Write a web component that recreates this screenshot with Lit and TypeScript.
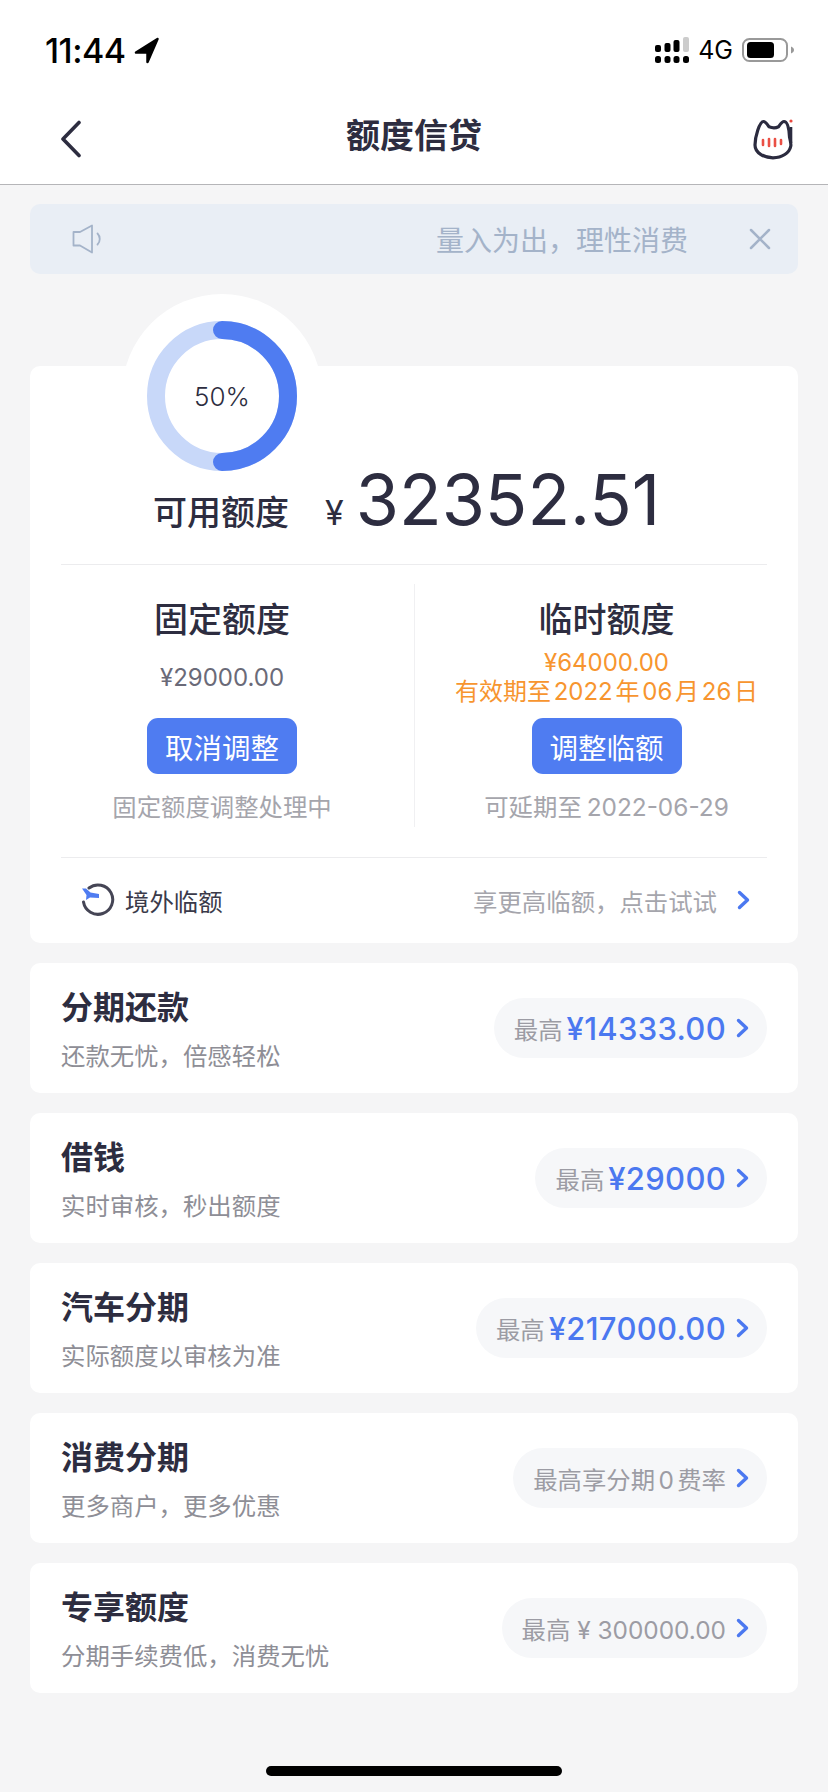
import { LitElement, html, css } from "lit";
import { customElement } from "lit/decorators.js";

const chevron = html`<svg class="chev" width="13" height="20" viewBox="0 0 13 20"><path d="M2.5 2.5 L10.5 10 L2.5 17.5" fill="none" stroke="#4b78f0" stroke-width="3.4" stroke-linecap="round" stroke-linejoin="round"/></svg>`;

const rows = [
  { t: "分期还款", s: "还款无忧，倍感轻松", label: "最高", v: "¥14333.00", cls: "" },
  { t: "借钱", s: "实时审核，秒出额度", label: "最高", v: "¥29000", cls: "" },
  { t: "汽车分期", s: "实际额度以审核为准", label: "最高", v: "¥217000.00", cls: "" },
  { t: "消费分期", s: "更多商户，更多优惠", label: "最高享分期 0 费率", v: "", cls: "tight" },
  { t: "专享额度", s: "分期手续费低，消费无忧", label: "最高 ¥ 300000.00", v: "", cls: "" },
];

@customElement("app-root")
export class AppRoot extends LitElement {
  static styles = css`
    :host { display: block; width: 828px; height: 1792px; background: #f5f5f6; color: #2d2d40; font-family: Inter, "Noto Sans CJK SC", sans-serif; overflow: hidden; position: relative; }
    * { box-sizing: border-box; }
    .top { background: #fff; border-bottom: 1px solid #b5b5b8; }
    .status { height: 100px; display: flex; align-items: center; padding: 0 34px 0 45px; color: #000; }
    .time { font-size: 34px; font-weight: 500; letter-spacing: -0.5px; margin-right: 8px; }
    .spacer { flex: 1; }
    .net { font-size: 25px; margin: 0 9px; }
    .nav { height: 84px; display: flex; align-items: center; justify-content: space-between; padding: 0 33px 0 60px; position: relative; }
    .nav svg { margin-bottom: 6px; }
    .title { position: absolute; left: 0; right: 0; top: 12px; text-align: center; font-size: 34px; line-height: 48px; font-weight: 600; }
    .notice { margin: 19px 30px 0; height: 70px; border-radius: 10px; background: #e9eef5; display: flex; align-items: center; padding: 0 27px 0 42px; color: #a4b3c9; font-size: 28px; }
    .notice .msg { margin-left: auto; margin-right: 61px; }
    .card { background: #fff; border-radius: 10px; margin: 0 30px; }
    .main { margin-top: 92px; position: relative; height: 577px; }
    .bump { position: absolute; left: 92px; top: -72px; width: 200px; height: 200px; border-radius: 50%; background: #fff; display: flex; align-items: center; justify-content: center; }
    .ring { position: relative; margin-top: 4px; width: 150px; height: 150px; display: flex; align-items: center; justify-content: center; font-size: 26px; font-weight: 300; }
    .ring svg { position: absolute; inset: 0; }
    .pct { position: relative; }
    .avail { height: 199px; border-bottom: 1px solid #ececee; margin: 0 31px; padding: 91px 0 0 92px; display: flex; align-items: baseline; }
    .avail .l { font-size: 34px; font-weight: 500; margin-right: 36px; }
    .avail .y { font-size: 34px; margin-right: 12px; }
    .avail .n { font-size: 70px; line-height: 86px; font-weight: 400; }
    .cols { display: grid; grid-template-columns: 1fr 1fr; margin-top: 19px; height: 243px; position: relative; }
    .col { display: flex; flex-direction: column; align-items: center; padding-top: 12px; }
    .col + .col { border-left: 1px solid #f0f0f2; }
    .col h3 { margin: 0; font-size: 34px; line-height: 48px; font-weight: 500; }
    .info { height: 66px; margin-bottom: 8px; display: flex; flex-direction: column; justify-content: center; align-items: center; font-size: 24px; line-height: 29px; color: #6a6a78; }
    .info.o { color: #f7952f; word-spacing: -4px; }
    .btn { width: 150px; height: 56px; border-radius: 11px; background: #4f7cf1; color: #fff; font-size: 28.5px; display: flex; align-items: center; justify-content: center; }
    .note { margin-top: 15px; line-height: 36px; font-size: 24.4px; color: #a5a5ac; word-spacing: -2px; }
    .abroad { margin: 30px 31px 0; border-top: 1px solid #ececee; height: 85px; display: flex; align-items: center; padding: 0 17px 0 20px; font-size: 24.4px; }
    .abroad .hint { margin-left: auto; color: #a5a5ac; margin-right: 20px; }
    .abroad .lbl { margin-left: 10px; color: #3a3a4a; }
    .list { display: flex; flex-direction: column; gap: 20px; margin-top: 20px; }
    .row { height: 130px; display: flex; align-items: center; justify-content: space-between; padding: 0 31px; }
    .row .txt { padding-top: 2px; }
    .row h4 { margin: 0; font-size: 32px; line-height: 46px; font-weight: 600; }
    .row p { margin: 8px 0 0; font-size: 24.4px; line-height: 34px; color: #8e8e96; }
    .pill { height: 60px; border-radius: 30px; background: #f6f7f9; padding: 0 18px 0 20px; display: flex; align-items: center; font-size: 24.4px; color: #9c9ca4; }
    .pill.tight { word-spacing: -3.5px; }
    .pill b { font-size: 31px; font-weight: 500; color: #4b78f0; margin-left: 4px; letter-spacing: 0.3px; }
    .pill .chev { margin-left: 10px; }
    .home { position: absolute; left: 266px; top: 1766px; width: 296px; height: 10px; border-radius: 5px; background: #000; }
  `;

  render() {
    return html`
      <div class="top">
        <div class="status">
          <span class="time">11:44</span>
          <svg width="26" height="27" viewBox="0 0 26 27"><path d="M23.5 2 L2 15.5 H13.5 V25 Z" fill="#000" stroke="#000" stroke-width="2.5" stroke-linejoin="round"/></svg>
          <span class="spacer"></span>
          <svg width="34" height="27" viewBox="0 0 34 27">
            <rect x="0" y="8" width="6" height="7" rx="2" fill="#000"/><rect x="9.500" y="6" width="6" height="9" rx="2" fill="#000"/><rect x="18.500" y="3" width="6" height="12" rx="2" fill="#000"/><rect x="28" y="0" width="6" height="15" rx="2" fill="#ccc"/>
            <rect x="0" y="19" width="6" height="7" rx="2.500" fill="#000"/><rect x="9.500" y="19" width="6" height="7" rx="2.500" fill="#000"/><rect x="18.500" y="19" width="6" height="7" rx="2.500" fill="#000"/><rect x="28" y="19" width="6" height="7" rx="2.500" fill="#000"/>
          </svg>
          <span class="net">4G</span>
          <svg width="52" height="24" viewBox="0 0 52 24">
            <rect x="1" y="1" width="44" height="22" rx="6.500" fill="none" stroke="#999" stroke-width="2"/>
            <rect x="5" y="4" width="27" height="16" rx="3.500" fill="#000"/>
            <path d="M49 8.500 C51 9.500 52 10.500 52 12 C52 13.500 51 14.500 49 15.500 Z" fill="#999"/>
          </svg>
        </div>
        <div class="nav">
          <svg width="22" height="38" viewBox="0 0 22 38"><path d="M19 2.500 L3 19 L19 35.500" fill="none" stroke="#2d2d40" stroke-width="3.600" stroke-linecap="round" stroke-linejoin="round"/></svg>
          <div class="title">额度信贷</div>
          <svg width="42" height="41" viewBox="0 0 42 41">
            <path d="M10.500 2.500 C12.500 2.500 14 5 16 7.800 C19 9 23 9 25.500 7.800 C27.500 5 29 2.500 31 2.500 C34.500 2.500 36 9 36.500 18 C37.500 22 38.200 25 37.800 27 C36.500 34 29 38.800 20 38.800 C11 38.800 2 34 2 26 C2 18 6.500 2.500 10.500 2.500 Z" fill="#fff" stroke="#2b2b3f" stroke-width="3.200" stroke-linejoin="round"/>
            <circle cx="38" cy="2" r="1.600" fill="#e8483f"/>
            <path d="M38 8 V24" stroke="#2b2b3f" stroke-width="2.600"/>
            <path d="M10 21 V26 M16 20 V27 M22 20 V27 M28 21 V25" stroke="#ea5045" stroke-width="2.600" stroke-linecap="round"/>
          </svg>
        </div>
      </div>

      <div class="notice">
        <svg width="32" height="30" viewBox="0 0 32 30" fill="none" stroke="#a4b3c9" stroke-width="1.800" stroke-linejoin="round" stroke-linecap="round">
          <path d="M1.500 8 H8 L20 1.500 V28.500 L8 21.500 H1.500 Z"/><path d="M25.500 9.500 C28.500 12.500 28.500 17.500 25.500 20.500"/>
        </svg>
        <span class="msg">量入为出，理性消费</span>
        <svg width="22" height="22" viewBox="0 0 22 22"><path d="M2 2 L20 20 M20 2 L2 20" stroke="#a4b3c9" stroke-width="2.500" stroke-linecap="round"/></svg>
      </div>

      <div class="card main">
        <div class="bump">
          <div class="ring">
            <svg width="150" height="150" viewBox="0 0 150 150" fill="none">
              <circle cx="75" cy="75" r="66" stroke="#c8d8f9" stroke-width="18"/>
              <path d="M75 9 A66 66 0 0 1 75 141" stroke="#4f7cf1" stroke-width="18" stroke-linecap="round"/>
            </svg>
            <span class="pct">50%</span>
          </div>
        </div>
        <div class="avail">
          <span class="l">可用额度</span><span class="y">¥</span><span class="n">32352.51</span>
        </div>
        <div class="cols">
          <div class="col">
            <h3>固定额度</h3>
            <div class="info">¥29000.00</div>
            <div class="btn">取消调整</div>
            <div class="note">固定额度调整处理中</div>
          </div>
          <div class="col">
            <h3>临时额度</h3>
            <div class="info o"><span>¥64000.00</span><span>有效期至 2022 年 06 月 26 日</span></div>
            <div class="btn">调整临额</div>
            <div class="note">可延期至 2022-06-29</div>
          </div>
        </div>
        <div class="abroad">
          <svg width="34" height="34" viewBox="0 0 34 34" fill="none">
            <path d="M8 5 A14.700 14.700 0 1 1 2.500 19" stroke="#454555" stroke-width="3" stroke-linecap="round"/>
            <path d="M1 5.500 L5 5.500 L9.500 9.500 L18 11 L18 15 L9 14.500 L5 17 L5.500 12 Z" fill="#4f7cf1"/>
          </svg>
          <span class="lbl">境外临额</span>
          <span class="hint">享更高临额，点击试试</span>
          ${chevron}
        </div>
      </div>

      <div class="list">
        ${rows.map(
          (r) => html`<div class="card row">
            <div class="txt"><h4>${r.t}</h4><p>${r.s}</p></div>
            <div class="pill ${r.cls}">${r.label}${r.v ? html`<b>${r.v}</b>` : ""}${chevron}</div>
          </div>`
        )}
      </div>
      <div class="home"></div>
    `;
  }
}
